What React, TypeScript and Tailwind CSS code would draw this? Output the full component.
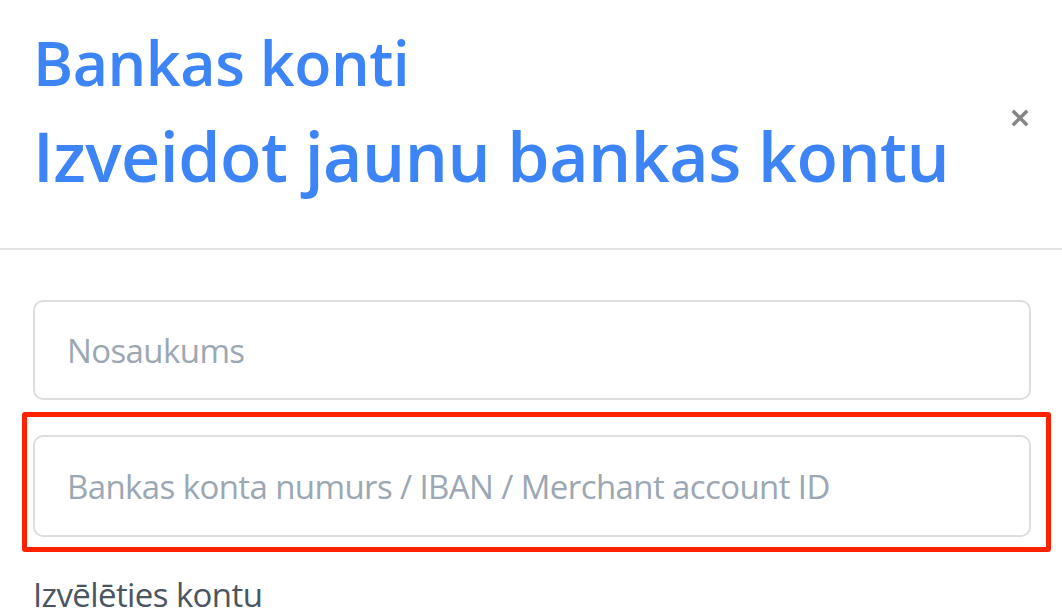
export default function App() {
  return (
    <div className="min-h-screen w-full overflow-hidden bg-white" style={{ fontFamily: '"Open Sans", sans-serif' }}>
      {/* Modal header */}
      <div className="relative border-b-2 border-[#e3e3e3] pl-[33px] pr-[31px] pt-[32px] pb-[58px]">
        <h2 className="text-[61px] leading-[62px] font-semibold tracking-[-0.5px] text-[#3d84f7]">Bankas konti</h2>
        <h1 className="mt-[28px] text-[68px] leading-[68px] font-semibold tracking-[-0.5px] text-[#3d84f7]">
          Izveidot jaunu bankas kontu
        </h1>
        <button className="absolute right-[33px] top-[109px] flex h-[18px] w-[18px] items-center justify-center" aria-label="Aizvērt">
          <svg viewBox="0 0 18 18" className="h-[18px] w-[18px]">
            <path d="M3 3L15 15M15 3L3 15" stroke="#858585" strokeWidth="3.4" strokeLinecap="square" />
          </svg>
        </button>
      </div>

      {/* Body */}
      <div className="flex flex-col pl-[33px] pr-[31px] pt-[50px]">
        <input
          placeholder="Nosaukums"
          className="h-[100px] w-full rounded-[10px] border-2 border-[#dedede] px-[32px] text-[33px] tracking-[-0.6px] text-[#333] outline-none placeholder:text-[#9ba7b3]"
        />

        <div className="relative mt-[35px]">
          <input
            placeholder="Bankas konta numurs / IBAN / Merchant account ID"
            className="h-[102px] w-full rounded-[10px] border-2 border-[#dedede] px-[32px] text-[33px] tracking-[-0.6px] text-[#333] outline-none placeholder:text-[#9ba7b3]"
          />
          {/* highlight annotation */}
          <div className="pointer-events-none absolute -left-[11px] -top-[23px] -right-[20px] -bottom-[15px] rounded-[3px] border-[5px] border-[#ff2200]" />
        </div>

        <label className="mt-[41px] text-[33px] leading-[33px] tracking-[-0.6px] text-[#4a5562]">Izvēlēties kontu</label>
      </div>
    </div>
  );
}
